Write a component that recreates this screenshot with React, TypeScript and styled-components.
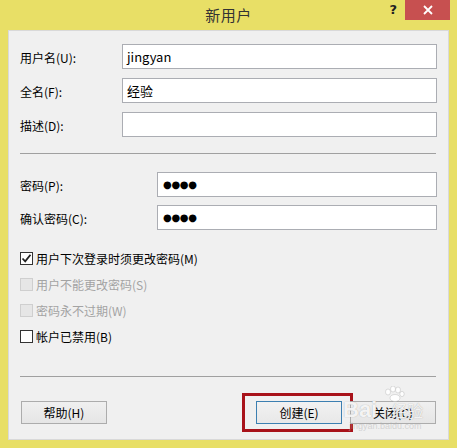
import React from "react";
import styled, { createGlobalStyle } from "styled-components";

const Global = createGlobalStyle`
  html, body { margin: 0; padding: 0; }
  body {
    background: #e8df66;
    font-family: "Noto Sans CJK SC", "Noto Sans", sans-serif;
    font-size: 12px;
    color: #000;
  }
`;

const Window = styled.div`
  width: 457px;
  height: 448px;
  background: #e8df66;
  display: flex;
  flex-direction: column;
  box-sizing: border-box;
`;

const TitleBar = styled.div`
  height: 30px;
  display: grid;
  grid-template-columns: 1fr auto 1fr;
  align-items: start;
`;

const Title = styled.div`
  grid-column: 2;
  font-size: 15px;
  line-height: 30px;
  color: #333;
  letter-spacing: 0.5px;
`;

const Controls = styled.div`
  grid-column: 3;
  justify-self: end;
  display: flex;
  align-items: flex-start;
  margin-right: 7px;
`;

const HelpMark = styled.div`
  font-family: "DejaVu Sans", sans-serif;
  font-weight: bold;
  font-size: 13px;
  line-height: 20px;
  color: #222;
  margin-right: 8px;
`;

const CloseBtn = styled.div`
  width: 45px;
  height: 20px;
  background: #c75050;
  display: flex;
  align-items: center;
  justify-content: center;
`;

const Panel = styled.div`
  position: relative;
  margin: 0 8px 8px 8px;
  height: 410px;
  box-sizing: border-box;
  border: 1px solid #d9d9d9;
  background: #f0f0f0;
  padding: 13px 11px 0 11px;
  display: flex;
  flex-direction: column;
`;

const FieldGroup = styled.div<{ $labelWidth: number; $gap: number }>`
  display: grid;
  grid-template-columns: ${(p) => p.$labelWidth}px 1fr;
  row-gap: ${(p) => p.$gap}px;
  align-items: center;
`;

const Label = styled.div`
  font-size: 12px;
  line-height: 16px;
  padding-top: 2px;
`;

const TextBox = styled.div`
  height: 25px;
  box-sizing: border-box;
  border: 1px solid #abadb3;
  background: #fff;
  padding: 0 4px;
  font-size: 13px;
  line-height: 21px;
  color: #000;
  display: flex;
  align-items: center;
`;

const Dots = styled.span`
  font-family: "DejaVu Sans", sans-serif;
  font-size: 10px;
  letter-spacing: -0.3px;
  padding-left: 1px;
  line-height: 21px;
`;

const Separator = styled.div<{ $top: number; $bottom: number }>`
  height: 1px;
  background: #a0a0a0;
  margin: ${(p) => p.$top}px 1px ${(p) => p.$bottom}px 0;
`;

const CheckList = styled.div`
  display: flex;
  flex-direction: column;
  margin-top: 15px;
`;

const CheckRow = styled.div<{ $disabled?: boolean }>`
  height: 26px;
  display: flex;
  align-items: center;
  gap: 3px;
  color: ${(p) => (p.$disabled ? "#a3a3a3" : "#000")};
  font-size: 12px;
`;

const Box = styled.div<{ $disabled?: boolean }>`
  width: 13px;
  height: 13px;
  box-sizing: border-box;
  border: 1px solid ${(p) => (p.$disabled ? "#cfcfcf" : "#333")};
  background: ${(p) => (p.$disabled ? "#e6e6e6" : "#fff")};
  display: flex;
  align-items: center;
  justify-content: center;
`;

const Footer = styled.div`
  display: flex;
  align-items: center;
  padding: 0 1px 0 1px;
`;

const Spacer = styled.div`
  flex: 1;
`;

const Button = styled.div<{ $default?: boolean }>`
  position: relative;
  width: 86px;
  height: 23px;
  box-sizing: border-box;
  border: 1px solid ${(p) => (p.$default ? "#3c7fb1" : "#acacac")};
  background: ${(p) =>
    p.$default
      ? "linear-gradient(#f2f2f2, #e8e8e8)"
      : "linear-gradient(#f0f0f0, #e5e5e5)"};
  display: flex;
  align-items: center;
  justify-content: center;
  font-size: 12px;
  color: #000;
`;

const Highlight = styled.div`
  position: absolute;
  left: -15px;
  top: -9px;
  width: 111px;
  height: 39px;
  box-sizing: border-box;
  border: 3px solid #a8121a;
  pointer-events: none;
`;

const Watermark = styled.div`
  position: absolute;
  left: 334px;
  top: 355px;
  display: flex;
  flex-direction: column;
  align-items: flex-start;
  pointer-events: none;
`;

const WmMain = styled.div`
  display: flex;
  align-items: center;
  font-family: "Liberation Sans", sans-serif;
  font-weight: bold;
  font-size: 22px;
  color: rgba(255, 255, 255, 0.9);
  text-shadow: 0 0 1px rgba(110, 110, 110, 0.6);
  line-height: 24px;
`;

const WmSub = styled.span`
  font-family: "Noto Sans CJK SC", sans-serif;
  font-weight: normal;
  font-size: 16px;
  margin-left: 14px;
  color: rgba(255, 255, 255, 0.85);
`;

const WmUrl = styled.div`
  font-family: "Liberation Sans", sans-serif;
  font-size: 9px;
  color: rgba(180, 180, 180, 0.5);
  margin-left: 6px;
  margin-top: -1px;
`;

const Paw = () => (
  <svg width="22" height="16" viewBox="0 0 22 16" style={{ marginLeft: 40, marginBottom: -4 }}>
    <g fill="rgba(255,255,255,0.9)" stroke="rgba(140,140,140,0.45)" strokeWidth="0.6">
      <ellipse cx="5" cy="6" rx="2.5" ry="3" />
      <ellipse cx="10" cy="3" rx="2.5" ry="3" />
      <ellipse cx="15" cy="4" rx="2.5" ry="3" />
      <ellipse cx="19" cy="8" rx="2.2" ry="2.6" />
      <ellipse cx="12" cy="12" rx="5" ry="3.5" />
    </g>
  </svg>
);

const Check = () => (
  <svg width="11" height="11" viewBox="0 0 11 11">
    <path d="M1.5 5.5 L4.2 8.3 L9.5 1.8" fill="none" stroke="#222" strokeWidth="1.8" />
  </svg>
);

const CloseX = () => (
  <svg width="10" height="10" viewBox="0 0 10 10">
    <path d="M1 1 L9 9 M9 1 L1 9" stroke="#fff" strokeWidth="1.8" />
  </svg>
);

const checks = [
  { text: "用户下次登录时须更改密码(M)", checked: true, disabled: false },
  { text: "用户不能更改密码(S)", checked: false, disabled: true },
  { text: "密码永不过期(W)", checked: false, disabled: true },
  { text: "帐户已禁用(B)", checked: false, disabled: false },
];

export default function App() {
  return (
    <>
      <Global />
      <Window>
        <TitleBar>
          <Title>新用户</Title>
          <Controls>
            <HelpMark>?</HelpMark>
            <CloseBtn>
              <CloseX />
            </CloseBtn>
          </Controls>
        </TitleBar>
        <Panel>
          <FieldGroup $labelWidth={102} $gap={9}>
            <Label>用户名(U):</Label>
            <TextBox>jingyan</TextBox>
            <Label>全名(F):</Label>
            <TextBox>经验</TextBox>
            <Label>描述(D):</Label>
            <TextBox />
          </FieldGroup>
          <Separator $top={16} $bottom={18} />
          <FieldGroup $labelWidth={137} $gap={8}>
            <Label>密码(P):</Label>
            <TextBox>
              <Dots>●●●●</Dots>
            </TextBox>
            <Label>确认密码(C):</Label>
            <TextBox>
              <Dots>●●●●</Dots>
            </TextBox>
          </FieldGroup>
          <CheckList>
            {checks.map((c) => (
              <CheckRow key={c.text} $disabled={c.disabled}>
                <Box $disabled={c.disabled}>{c.checked && <Check />}</Box>
                <span>{c.text}</span>
              </CheckRow>
            ))}
          </CheckList>
          <Separator $top={27} $bottom={24} />
          <Footer>
            <Button>帮助(H)</Button>
            <Spacer />
            <Button $default>
              创建(E)
              <Highlight />
            </Button>
            <Button style={{ marginLeft: 8 }}>关闭(C)</Button>
          </Footer>
          <Watermark>
            <Paw />
            <WmMain>
              Bai
              <WmSub>经验</WmSub>
            </WmMain>
            <WmUrl>jingyan.baidu.com</WmUrl>
          </Watermark>
        </Panel>
      </Window>
    </>
  );
}
